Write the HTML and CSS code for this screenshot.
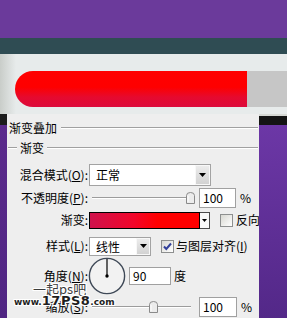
FILE: index.html
```html
<!DOCTYPE html>
<html>
<head>
<meta charset="utf-8">
<link rel="stylesheet" href="styles.css">
</head>
<body>
<div class="band-purple"></div>
<div class="band-teal"></div>
<div class="preview">
  <div class="bar-row">
    <div class="bar"></div>
    <div class="bar-rest"></div>
  </div>
</div>
<div class="main">
  <div class="side side-left"></div>
  <div class="dialog">
    <div class="title-row"><span class="title">渐变叠加</span><span class="rule"></span></div>
    <div class="group-row"><span class="rule lead"></span><span class="title">渐变</span><span class="rule"></span></div>

    <div class="form-row r-blend">
      <span class="lbl">混合模式(<u>O</u>):</span>
      <div class="select sel-blend"><span class="sel-text">正常</span><span class="sel-btn"><svg width="7" height="4" viewBox="0 0 7 4"><path d="M0 0H7L3.5 4Z" fill="#000"/></svg></span></div>
    </div>

    <div class="form-row r-opacity">
      <span class="lbl">不透明度(<u>P</u>):</span>
      <div class="slider">
        <span class="track track-op"></span>
        <svg class="thumb" style="left:98px" width="9" height="12" viewBox="0 0 9 12"><path d="M0.5 11.5V3.5Q0.5 0.5 4.5 0.5Q8.5 0.5 8.5 3.5V11.5Z" fill="#ececec" stroke="#8a8a8a"/><path d="M2 4V10" stroke="#fff"/></svg>
      </div>
      <span class="num">100</span>
      <span class="unit">%</span>
    </div>

    <div class="form-row r-grad">
      <span class="lbl">渐变:</span>
      <div class="swatch"></div>
      <span class="grad-btn"><svg width="5" height="3" viewBox="0 0 5 3"><path d="M0 0H5L2.5 3Z" fill="#000"/></svg></span>
      <span class="chk"></span>
      <span class="chk-text">反向</span>
    </div>

    <div class="form-row r-style">
      <span class="lbl">样式(<u>L</u>):</span>
      <div class="select sel-style"><span class="sel-text">线性</span><span class="sel-btn"><svg width="7" height="4" viewBox="0 0 7 4"><path d="M0 0H7L3.5 4Z" fill="#000"/></svg></span></div>
      <span class="chk chk-on"><svg width="11" height="11" viewBox="0 0 11 11"><path d="M2 5.5L4.3 8L9 2.5" fill="none" stroke="#33419a" stroke-width="2"/></svg></span>
      <span class="chk-text align-text">与图层对齐(<u>I</u>)</span>
    </div>

    <div class="form-row r-angle">
      <span class="lbl">角度(<u>N</u>):</span>
      <svg class="dial" width="38" height="38" viewBox="0 0 38 38"><circle cx="19" cy="19" r="17.6" fill="#f2f2f2" stroke="#3f4957" stroke-width="1.4"/><line x1="19" y1="19" x2="19" y2="2" stroke="#000" stroke-width="1.2"/><circle cx="19" cy="19" r="1.7" fill="#000"/></svg>
      <span class="num num-angle">90</span>
      <span class="unit unit-deg">度</span>
    </div>

    <div class="form-row r-scale">
      <span class="lbl">缩放(<u>S</u>):</span>
      <div class="slider">
        <span class="track track-sc"></span>
        <svg class="thumb" style="left:61px" width="9" height="12" viewBox="0 0 9 12"><path d="M0.5 11.5V3.5Q0.5 0.5 4.5 0.5Q8.5 0.5 8.5 3.5V11.5Z" fill="#ececec" stroke="#8a8a8a"/><path d="M2 4V10" stroke="#fff"/></svg>
      </div>
      <span class="num num-sc">100</span>
      <span class="unit">%</span>
    </div>
  </div>
  <div class="side side-right"></div>

  <div class="wm wm1">一起ps吧</div>
  <div class="wm wm2"><span class="wm-s">www.</span><span class="wm-b">17PS8</span><span class="wm-s">.com</span></div>
</div>
</body>
</html>
```

FILE: styles.css
```css
* { box-sizing: border-box; }
html, body { margin: 0; padding: 0; }
body {
  width: 287px;
  height: 318px;
  overflow: hidden;
  background: #eeeeee;
  color: #000;
  font-family: "Noto Sans CJK SC", "Liberation Sans", sans-serif;
  font-size: 12px;
}
u { text-decoration: underline; text-underline-offset: 1px; }

.band-purple { height: 38px; background: #6b3a9b; }
.band-teal { height: 16px; background: #2f4c53; }

.preview {
  height: 60px;
  padding-top: 17px;
  background: linear-gradient(to right, #c9cdc9, #e7ebeb 16px);
}
.bar-row { display: flex; height: 36px; }
.bar {
  margin-left: 15px;
  width: 232px;
  border-radius: 18px 0 0 18px;
  background: linear-gradient(#ff0000 0%, #fe0000 45%, #e60a2e 72%, #dc0b3c 100%);
}
.bar-rest { flex: 1; background: #c6c6c6; }

.main { position: relative; display: flex; height: 204px; }
.side-left {
  width: 7px;
  background: linear-gradient(#1c1c1c 0 11px, #5b2a8c 11px, #4f2582 100%);
}
.side-right {
  flex: 1;
  background: linear-gradient(#d6d8d4 0 2px, #141414 2px 11px, #6c37a6 11px, #532888 100%);
}
.dialog {
  width: 252px;
  background: #eeeeee;
  overflow: hidden;
  padding-top: 4px;
  white-space: nowrap;
}

.title-row, .group-row {
  display: flex;
  align-items: center;
  height: 20px;
}
.title-row { padding-left: 2px; }
.title { line-height: 16px; }
.rule {
  flex: 1;
  height: 2px;
  border-top: 1px solid #a0a0a0;
  border-bottom: 1px solid #ffffff;
  margin-left: 4px;
  margin-right: 1px;
}
.group-row .title { margin-left: 3px; }
.group-row .rule { margin-left: 3px; }
.rule.lead { flex: none; width: 9px; margin-left: 1px; margin-right: 0; }

.form-row { display: flex; align-items: center; }
.lbl {
  flex: none;
  width: 81px;
  text-align: right;
  line-height: 16px;
}
.r-blend { margin-top: 5px; height: 24px; }
.r-opacity { height: 22px; }
.r-grad { height: 22px; }
.r-style { margin-top: 3px; height: 24px; }
.r-angle { height: 36px; }
.r-scale { height: 26px; }

.select {
  display: flex;
  margin-left: 1px;
  border: 1px solid #a3a3a3;
  background: #fff;
}
.sel-blend { width: 122px; height: 22px; }
.sel-style { width: 62px; height: 19px; }
.sel-text { flex: 1; padding-left: 6px; line-height: 18px; }
.sel-blend .sel-text { line-height: 20px; }
.sel-btn {
  width: 15px;
  display: flex;
  align-items: center;
  justify-content: center;
  background: linear-gradient(#ececec, #d2d2d2);
  border: 1px solid #f8f8f8;
}
.sel-style .sel-btn { width: 14px; }

.slider { position: relative; width: 108px; height: 14px; flex: none; }
.track {
  position: absolute;
  left: 4px;
  top: 6px;
  height: 2px;
  border-top: 1px solid #9c9c9c;
  border-bottom: 1px solid #ffffff;
}
.track-op { width: 94px; }
.track-sc { width: 99px; }
.thumb { position: absolute; top: 1px; }

.num {
  flex: none;
  margin-left: 3px;
  width: 37px;
  height: 20px;
  border: 1px solid #a0a0a0;
  background: #fff;
  padding-left: 3px;
  line-height: 18px;
}
.num-sc { width: 38px; }
.unit { margin-left: 4px; line-height: 16px; }

.swatch {
  flex: none;
  margin-left: 1px;
  width: 111px;
  height: 17px;
  border: 1px solid #000;
  background: linear-gradient(to right, #cf124c 0%, #f2062a 40%, #ff0000 62%, #ff0000 100%);
}
.grad-btn {
  flex: none;
  width: 10px;
  height: 17px;
  border: 1px solid #4a4a4a;
  border-left: none;
  background: #f8f8f8;
  display: flex;
  align-items: center;
  justify-content: center;
}
.chk {
  flex: none;
  margin-left: 10px;
  width: 13px;
  height: 13px;
  border: 1px solid #8d8f8f;
  background: linear-gradient(135deg, #d8d8d2, #ffffff);
  display: flex;
  align-items: center;
  justify-content: center;
}
.chk-text { margin-left: 3px; line-height: 16px; }
.align-text { margin-left: 2px; }

.dial { flex: none; }
.num-angle { margin-left: 3px; width: 42px; height: 18px; line-height: 16px; }
.unit-deg { margin-left: 3px; }

.wm {
  position: absolute;
  white-space: nowrap;
  text-shadow: 1px 0 0 #fff, -1px 0 0 #fff, 0 1px 0 #fff, 0 -1px 0 #fff, 1px 1px 0 #fff, -1px -1px 0 #fff, 1px -1px 0 #fff, -1px 1px 0 #fff;
}
.wm1 {
  left: 33px;
  top: 168px;
  font-size: 13px;
  line-height: 14px;
  color: #3c3c3c;
}
.wm2 {
  left: 14px;
  top: 181px;
  line-height: 12px;
  color: #1e1e1e;
  font-family: "DejaVu Sans", sans-serif;
  font-weight: bold;
}
.wm-s { font-size: 9px; }
.wm-b { font-size: 13px; letter-spacing: 0.5px; }
```
